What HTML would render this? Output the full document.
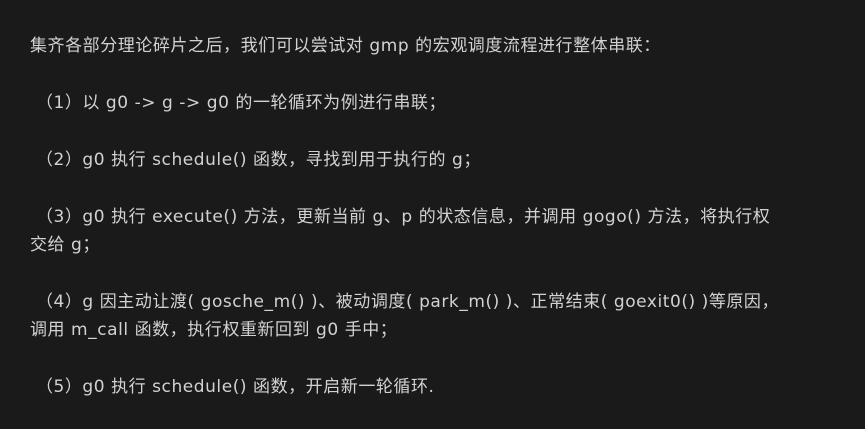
<!DOCTYPE html>
<html><head><meta charset="utf-8"><style>
html,body{margin:0;padding:0;background:#1a1a1a;}
body{width:865px;height:429px;overflow:hidden;padding:32px 0 0 30px;box-sizing:border-box;
font-family:"DejaVu Sans","Noto Sans CJK SC",sans-serif;font-size:17px;letter-spacing:0.55px;color:#d2d2d2;}
p{margin:0 0 29px 0;line-height:28px;width:835px;}
</style></head><body>
<p>集齐各部分理论碎片之后，我们可以尝试对 gmp 的宏观调度流程进行整体串联：</p>
<p>&nbsp;（1）以 g0 -&gt; g -&gt; g0 的一轮循环为例进行串联；</p>
<p>&nbsp;（2）g0 执行 schedule() 函数，寻找到用于执行的 g；</p>
<p>&nbsp;（3）g0 执行 execute() 方法，更新当前 g、p 的状态信息，并调用 gogo() 方法，将执行权<br>交给 g；</p>
<p>&nbsp;（4）g 因主动让渡( gosche_m() )、被动调度( park_m() )、正常结束( goexit0() )等原因，<br>调用 m_call 函数，执行权重新回到 g0 手中；</p>
<p>&nbsp;（5）g0 执行 schedule() 函数，开启新一轮循环.</p>
</body></html>
